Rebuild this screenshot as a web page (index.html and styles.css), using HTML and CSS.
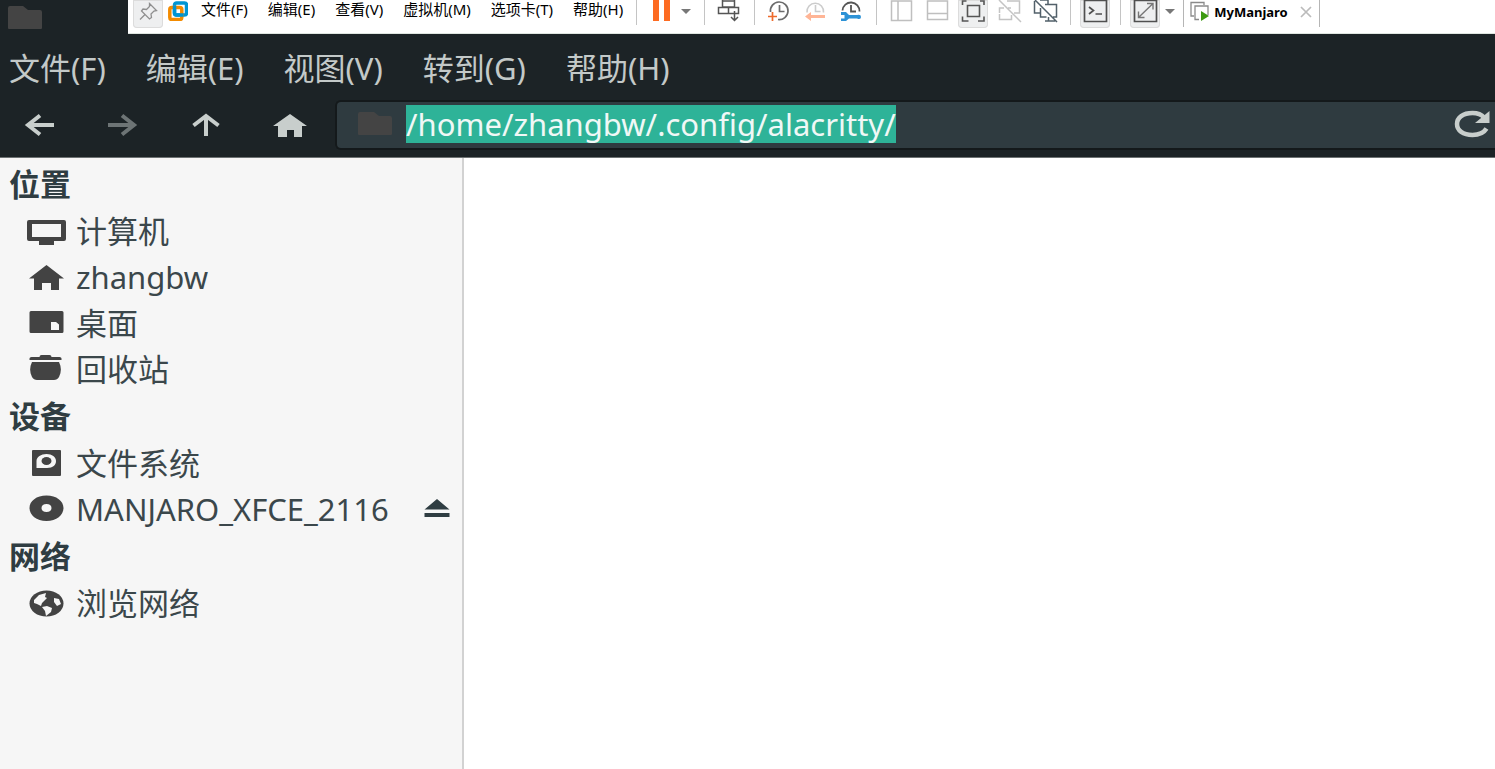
FILE: index.html
```html
<!DOCTYPE html>
<html lang="zh-CN">
<head>
    <meta charset="UTF-8">
    <meta name="viewport" content="width=device-width, initial-scale=1.0">
    <title>alacritty</title>
    <link rel="stylesheet" href="styles.css">
</head>
<body>

    <header class="top">
        <div class="window-icon">
            <svg width="36" height="26" viewBox="0 0 36 26"><path d="M2 0h13l5 4h12q2 0 2 2v16q0 1-1 1H1q-1 0-1-1V2q0-2 2-2z" fill="#444"/></svg>
        </div>

        <!-- VMware full screen bar -->
        <div class="vm-bar">
            <button class="tool active" aria-label="固定">
                <svg viewBox="0 0 30 28" fill="none" stroke="#8f8f8f" stroke-width="1.3"><path d="M16.500 3.500l7 7-2.500.5-3 3 .5 3.500-2 1.500-8-8 1.500-2 3.500.500 3-3zM12 14.500L7 19.500"/></svg>
            </button>
            <svg class="vm-logo" viewBox="0 0 20 20" fill="none" stroke-width="3.500">
                <rect x="6.500" y="2" width="12" height="12" rx="2" stroke="#0095d3"/>
                <rect x="1.800" y="6.500" width="12" height="12" rx="2" stroke="#f38b00"/>
                <path d="M6.500 5v7q0 2 2 2h7" stroke="#0095d3"/>
            </svg>
            <nav class="vm-menu">
                <button>文件(F)</button>
                <button>编辑(E)</button>
                <button>查看(V)</button>
                <button>虚拟机(M)</button>
                <button>选项卡(T)</button>
                <button>帮助(H)</button>
            </nav>
            <span class="sep"></span>
            <button class="tool" aria-label="挂起">
                <svg viewBox="0 0 30 28" fill="#fd6b21"><path d="M7 0h6v21H7zM18 0h6v21h-6z"/></svg>
            </button>
            <button class="caret" aria-label="电源选项"><svg viewBox="0 0 10 28"><path d="M0 9h10l-5 5z" fill="#777"/></svg></button>
            <span class="sep"></span>
            <button class="tool" aria-label="发送 Ctrl+Alt+Del">
                <svg viewBox="0 0 30 28" fill="none" stroke="#555" stroke-width="1.500"><path d="M8.500 0v7h12V0M8.500 1h12M4.500 7.500h20v6h-20zM14.500 7.500v6M20.500 11v9M17 17l3.500 3.500L24 17"/></svg>
            </button>
            <span class="sep"></span>
            <button class="tool" aria-label="拍摄快照">
                <svg viewBox="0 0 30 28" fill="none" stroke="#6b6b6b" stroke-width="1.700"><path d="M6.500 12a8.800 8.800 0 1 1 7.500 7.500M15.500 5v6.500h5"/><path d="M4 16.500h9M8.500 12v9" stroke="#ed6b2d"/></svg>
            </button>
            <button class="tool" aria-label="恢复快照">
                <svg viewBox="0 0 30 28" fill="none" stroke="#ccc" stroke-width="1.600"><path d="M7 12.500a8.300 8.300 0 1 1 16.500 0M15.500 5v6.500h5"/><path d="M5 16.500l6-4.500v3h14v3H11v3z" fill="#ffb596" stroke="none"/></svg>
            </button>
            <button class="tool" aria-label="快照管理器">
                <svg viewBox="0 0 30 28" fill="none" stroke="#555" stroke-width="1.800"><path d="M6.500 10.500a8.500 8.500 0 1 1 17 1M15 5v6.500h5"/><path d="M5 12h5l3 3h8q4-1 4 2t-4 1.500h-8l-3 2.500H5v-2.500h3.500v-3.500H5z" fill="#2d92d6" stroke="none"/></svg>
            </button>
            <span class="sep"></span>
            <button class="tool" aria-label="显示库">
                <svg viewBox="0 0 30 28" fill="none" stroke="#bfbfbf" stroke-width="1.500"><path d="M5.500 1h20v19.500h-20zM12 1v19.500"/></svg>
            </button>
            <button class="tool" aria-label="缩略图栏">
                <svg viewBox="0 0 30 28" fill="none" stroke="#bfbfbf" stroke-width="1.500"><path d="M5.500 1h20v18.500h-20zM5.500 13.500h20"/></svg>
            </button>
            <button class="tool active" aria-label="全屏">
                <svg viewBox="0 0 30 28" fill="none" stroke="#555" stroke-width="1.600"><path d="M9.500 5.500h12v11h-12zM4.500 5V1h4M22 1h4v4M4.500 16.500V21h6M26 16.500V21h-6"/></svg>
            </button>
            <button class="tool" aria-label="Unity">
                <svg viewBox="0 0 30 28" fill="none" stroke="#c4c4c4" stroke-width="1.500"><path d="M13 1h12.500v12H20M5.500 13V8H10M5.500 14v5.500h12V15M17 8h-3M5 0l22 22"/></svg>
            </button>
            <button class="tool" aria-label="控制台视图">
                <svg viewBox="0 0 30 28" fill="none" stroke="#52606a" stroke-width="1.500"><path d="M4.500 1v12h6M10 0h8v4M10.500 8v9h6M15 4.500h11.500v12.500H23M18.500 17v4M15 21h10M5 0l22 22"/></svg>
            </button>
            <span class="sep"></span>
            <button class="tool active" aria-label="控制台">
                <svg viewBox="0 0 30 28" fill="none" stroke="#505050" stroke-width="1.700"><path d="M4.500 0v21.500h22V0M4.500.5h22M9 7l4.500 3.500L9 14M15.500 14H22"/></svg>
            </button>
            <span class="sep"></span>
            <button class="tool active" aria-label="自动拉伸">
                <svg viewBox="0 0 30 28" fill="none" stroke="#505050" stroke-width="1.700"><path d="M4.500 0v21.500h22V0M4.500.5h22"/><path d="M8.500 11.500v6h6M17 3.500h6v6M9 17L22.500 4" stroke="#777" stroke-width="1.400"/></svg>
            </button>
            <button class="caret" aria-label="拉伸选项"><svg viewBox="0 0 10 28"><path d="M0 9h10l-5 5z" fill="#777"/></svg></button>
            <div class="vm-tab">
                <svg width="20" height="22" viewBox="0 0 20 22" fill="none" stroke="#8a8a8a" stroke-width="1.300"><path d="M14 4V1.500H1V15h3"/><path d="M9 18.500H5V5h13v9"/><path d="M11 10l8 5-8 5z" fill="#3d9a12" stroke="none"/></svg>
                <span>MyManjaro</span>
                <button class="tab-close" aria-label="关闭">
                    <svg width="12" height="12" viewBox="0 0 12 12"><path d="M1 1l10 10M11 1L1 11" stroke="#bbb" stroke-width="1.700"/></svg>
                </button>
            </div>
        </div>
    </header>

    <nav class="menu">
        <button>文件(F)</button>
        <button>编辑(E)</button>
        <button>视图(V)</button>
        <button>转到(G)</button>
        <button>帮助(H)</button>
    </nav>

    <div class="toolbar">
        <button class="nav-button" aria-label="后退">
            <svg width="36" height="26" viewBox="0 0 36 26"><path d="M18 3.500L6 13l12 9.500M6 13h26" /></svg>
        </button>
        <button class="nav-button" aria-label="前进" disabled>
            <svg width="36" height="26" viewBox="0 0 36 26"><path d="M18 3.500L30 13l-12 9.500M30 13H4" /></svg>
        </button>
        <button class="nav-button" aria-label="向上">
            <svg width="36" height="26" viewBox="0 0 36 26"><path d="M5.500 13.500L18 4l12.500 9.500M18 4v20"/></svg>
        </button>
        <button class="nav-button" aria-label="主目录">
            <svg width="36" height="26" viewBox="0 0 36 26"><path class="solid" d="M18 2l17 12h-5v11h-8v-7h-7v7H6V14H1z"/></svg>
        </button>
        <div class="path-bar">
            <svg width="36" height="26" viewBox="0 0 36 26"><path d="M3 1h14l5 4h11q2 0 2 2v16q0 1-1 1H2q-1 0-1-1V3q0-2 2-2z" fill="#444"/></svg>
            <input class="path" id="path" type="text" aria-label="路径" value="/home/zhangbw/.config/alacritty/" spellcheck="false">
            <button class="reload" aria-label="重新载入">
                <svg width="36" height="28" viewBox="0 0 36 28"><path d="M32.500 18.500C30 22.500 25 25 18.500 25 9 25 3 20.500 3 14S9 3 18.500 3c5 0 9 1.500 11.500 4.500" fill="none" stroke="#c8cecc" stroke-width="4.500"/><path d="M35.500 1v12H21z" fill="#c8cecc"/></svg>
            </button>
        </div>
    </div>

    <main class="content">
        <aside class="sidebar">
            <h2>位置</h2>
            <a class="place" href="#">
                <svg width="40" height="30" viewBox="0 0 40 30"><path fill-rule="evenodd" d="M3 4h35q2 0 2 2v17q0 2-2 2H28v4H13v-4H3q-2 0-2-2V6q0-2 2-2zm3 4v13h29V8z"/></svg>
                <span>计算机</span>
            </a>
            <a class="place" href="#">
                <svg width="40" height="30" viewBox="0 0 40 30"><path d="M20.500 3L38 16.500h-5V28h-8v-7h-9v7H8V16.500H3z"/></svg>
                <span>zhangbw</span>
            </a>
            <a class="place" href="#">
                <svg width="40" height="30" viewBox="0 0 40 30"><path fill-rule="evenodd" d="M5 3h31q1.500 0 1.500 1.500v19q0 1.500-1.500 1.500H5q-1.500 0-1.500-1.500v-19Q3.500 3 5 3zm20 11v8h8v-5.500L30 14z"/></svg>
                <span>桌面</span>
            </a>
            <a class="place" href="#">
                <svg width="40" height="30" viewBox="0 0 40 30"><path d="M3.500 6V4.500q0-1.500 2-1.500h8q0-2 2-2h8q2 0 2 2h8q2 0 2 1.500V6zM6 8h27c2.500 5 2.500 10 0 15-1 2-3 3-5 3H11c-2 0-4-1-5-3-2.500-5-2.500-10 0-15z"/></svg>
                <span>回收站</span>
            </a>

            <h2>设备</h2>
            <a class="place" href="#">
                <svg width="40" height="30" viewBox="0 0 40 30"><path fill-rule="evenodd" d="M7 2h27q1 0 1 1v24q0 1-1 1H7q-1 0-1-1V3q0-1 1-1zm3.500 18H21c6 0 9-3 9-7s-4-7-9.500-7-10 3-10 7z"/><ellipse cx="20.500" cy="13" rx="5" ry="4"/></svg>
                <span>文件系统</span>
            </a>
            <a class="place" href="#">
                <svg width="40" height="30" viewBox="0 0 40 30"><path fill-rule="evenodd" d="M20.500 1.500c10 0 17 5.500 17 12.500s-7 13-17 13-17-6-17-13 7-12.500 17-12.500zm0 8.500c-3 0-5 1.500-5 4s2 4 5 4 5-1.500 5-4-2-4-5-4z"/></svg>
                <span>MANJARO_XFCE_2116</span>
                <svg class="eject" width="26" height="20" viewBox="0 0 26 20"><path d="M13 0l12.500 10.500H.5zM.5 14h25v4H.5z"/></svg>
            </a>

            <h2>网络</h2>
            <a class="place" href="#">
                <svg width="40" height="30" viewBox="0 0 40 30"><ellipse cx="20.500" cy="15.500" rx="17" ry="13"/><path class="land" d="M8 12l5-5 7-2-1 4 2 1-5 5-1 3-4-2-3-1zM16 19l5-1 5 2-1 4-5 4-1-5zM28 10l5 1 2 5-4 2-3-4z"/></svg>
                <span>浏览网络</span>
            </a>
        </aside>
        <section class="files"></section>
    </main>

    <script>
        const path = document.getElementById('path');
        path.focus();
        path.select();
    </script>
</body>
</html>
```
FILE: styles.css
```css
* {
    box-sizing: border-box;
}
body {
    margin: 0;
    min-height: 100vh;
    display: flex;
    flex-direction: column;
    background: #1c2326;
    font-family: "Noto Sans", "Noto Sans CJK SC", sans-serif;
}
button {
    border: none;
    background: none;
    padding: 0;
    font: inherit;
    color: inherit;
}
svg {
    display: block;
    flex-shrink: 0;
}

/* top bar */
.top {
    display: flex;
    height: 34px;
}
.window-icon {
    width: 128px;
    padding: 6px 8px;
    flex-shrink: 0;
}
.vm-bar {
    flex: 1;
    display: flex;
    align-items: flex-start;
    background: #fff;
    border-bottom: 1px solid #dfe6e0;
    padding-left: 5px;
    font-size: 15px;
    color: #000;
    white-space: nowrap;
}
.vm-logo {
    width: 20px;
    height: 20px;
    margin: 1px 13px 0 5px;
}
.vm-menu {
    display: flex;
    gap: 20px;
    margin-right: 3px;
    line-height: 18px;
}
.sep {
    width: 1px;
    height: 25px;
    margin: 0 9px 0 10px;
    background: #c4c4c4;
}
.tool {
    width: 30px;
    height: 28px;
}
.tool + .tool {
    margin-left: 6px;
}
.tool.active {
    background: #eeeff0;
    box-shadow: inset 0 0 0 1px #dcdcdc;
    border-radius: 0 0 4px 4px;
}
.caret {
    width: 10px;
    height: 28px;
    margin: 0 3px 0 5px;
}
.vm-tab {
    display: flex;
    align-items: center;
    height: 27px;
    margin-left: 5px;
    padding: 0 7px 3px 6px;
    border: 1px solid #b5b5b5;
    border-width: 0 1px;
    gap: 4px;
    font-size: 13px;
    font-weight: bold;
}
.tab-close {
    margin-left: 8px;
}

/* file manager */
.menu {
    display: flex;
    gap: 40px;
    height: 58px;
    padding: 10px 9px 0;
    align-items: center;
    font-size: 31px;
    line-height: 40px;
    color: #c3c9c8;
    white-space: nowrap;
}
.toolbar {
    display: flex;
    align-items: center;
    height: 66px;
    border-bottom: 1px solid #6d7273;
}
.nav-button {
    width: 84px;
    height: 50px;
    display: flex;
    align-items: center;
    justify-content: center;
    flex-shrink: 0;
}
.nav-button:first-child {
    width: 80px;
}
.nav-button path {
    fill: none;
    stroke: #c8cecc;
    stroke-width: 4;
}
.nav-button .solid {
    fill: #c8cecc;
    stroke: none;
}
.nav-button:disabled path {
    stroke: #6d7475;
}
.path-bar {
    flex: 1;
    display: flex;
    align-items: center;
    height: 50px;
    margin-left: 3px;
    padding: 0 5px 2px 20px;
    background: #2f3b40;
    border: 2px solid #14191b;
    border-right: none;
    border-radius: 6px 0 0 6px;
}
.path {
    flex: 1;
    min-width: 0;
    height: 38px;
    margin-left: 13px;
    padding: 0;
    border: none;
    outline: none;
    background: none;
    font: inherit;
    font-size: 31px;
    line-height: 36px;
    color: #f0f8f6;
}
.path::selection {
    background: #2eb398;
    color: #f0f8f6;
}
.content {
    flex: 1;
    display: flex;
    background: #fff;
}
.sidebar {
    width: 464px;
    padding-top: 2px;
    background: #f6f6f6;
    border-right: 2px solid #d2d2d2;
    color: #3b474b;
}
.sidebar h2 {
    margin: 0;
    padding-left: 9px;
    font-size: 31px;
    line-height: 48px;
    color: #2f3d42;
}
.place {
    display: flex;
    align-items: center;
    gap: 10px;
    height: 46px;
    padding: 0 12px 0 26px;
    font-size: 31px;
    line-height: 46px;
    color: inherit;
    text-decoration: none;
    white-space: nowrap;
}
.place svg {
    fill: #434343;
}
.place .land {
    fill: #f6f6f6;
}
.place .eject {
    margin-left: auto;
    fill: #2f3d42;
}
.files {
    flex: 1;
}
```
